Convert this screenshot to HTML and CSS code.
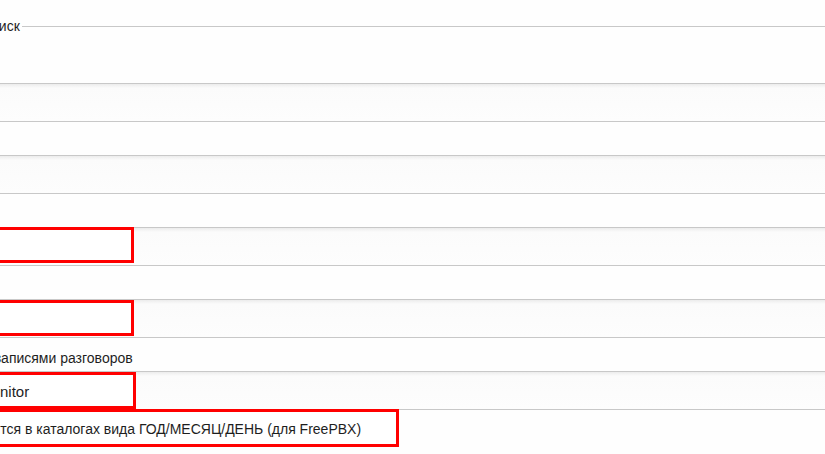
FILE: index.html
```html
<!DOCTYPE html>
<html lang="ru">
<head>
<meta charset="utf-8">
<title>Настройки</title>
<link rel="stylesheet" href="styles.css">
</head>
<body>
<div class="page">
  <div class="group">
    <div class="legend"><span class="legend-text">Поиск</span><span class="legend-line"></span></div>
    <div class="group-body"></div>
  </div>
  <div class="row tall shaded"></div>
  <div class="row short"><span class="label">Хост</span></div>
  <div class="row tall shaded"></div>
  <div class="row short"><span class="label">Логин</span></div>
  <div class="row tall shaded"><input class="field box1" type="text" value=""></div>
  <div class="row short"><span class="label">Пароль</span></div>
  <div class="row tall shaded"><input class="field box2" type="password" value=""></div>
  <div class="row short"><span class="label">Каталог с записями разговоров</span></div>
  <div class="row tall shaded"><input class="field box3" type="text" value="/var/monitor"></div>
  <div class="row last">
    <label class="check box4"><input class="checkbox" type="checkbox"><span>Хранятся в каталогах вида ГОД/МЕСЯЦ/ДЕНЬ (для FreePBX)</span></label>
  </div>
</div>
</body>
</html>
```
FILE: styles.css
```css
html, body {
  margin: 0;
  padding: 0;
  background: #fefefe;
  overflow: hidden;
}
body {
  font-family: "Liberation Sans", Arial, sans-serif;
  font-size: 14px;
  color: #1e1e1e;
}
.page {
  margin-left: -71px;
  width: 900px;
}
.legend {
  display: flex;
  align-items: center;
  height: 15px;
  margin-top: 19px;
  padding-left: 52px;
}
.legend-text {
  line-height: 15px;
}
.legend-line {
  flex: 1;
  height: 1px;
  margin-left: 2px;
  background: #c8c8c8;
}
.group-body {
  height: 49px;
  border-bottom: 1px solid #c8c8c8;
}
.row {
  border-bottom: 1px solid #c8c8c8;
  display: flex;
  align-items: flex-start;
  box-sizing: border-box;
}
.row.tall { height: 38px; }
.row.short {
  height: 34px;
  align-items: center;
}
.row.shaded {
  background: linear-gradient(to bottom, #ececec 0, #fbfbfb 4px, #fdfdfd 100%);
}
.row.last {
  border-bottom: none;
  height: 45px;
}
.label {
  line-height: 16px;
  padding-top: 6px;
}
.field {
  box-sizing: border-box;
  margin: 0;
  border: 3px solid #ff0000;
  background: #ffffff;
  font-family: "Liberation Sans", Arial, sans-serif;
  font-size: 15px;
  color: #1e1e1e;
  padding: 0 0 0 18px;
  outline: none;
}
.box1 { width: 205px; height: 36px; margin-top: -1px; }
.box2 { width: 205px; height: 36px; }
.box3 { width: 207px; height: 37px; padding-top: 1px; }
.box4 {
  box-sizing: border-box;
  width: 470px;
  height: 38px;
  margin-top: -1px;
  border: 3px solid #ff0000;
  background: #ffffff;
  display: flex;
  align-items: center;
  padding-top: 2px;
}
.checkbox {
  width: 13px;
  height: 13px;
  margin: 0 7px 0 8px;
}
```
